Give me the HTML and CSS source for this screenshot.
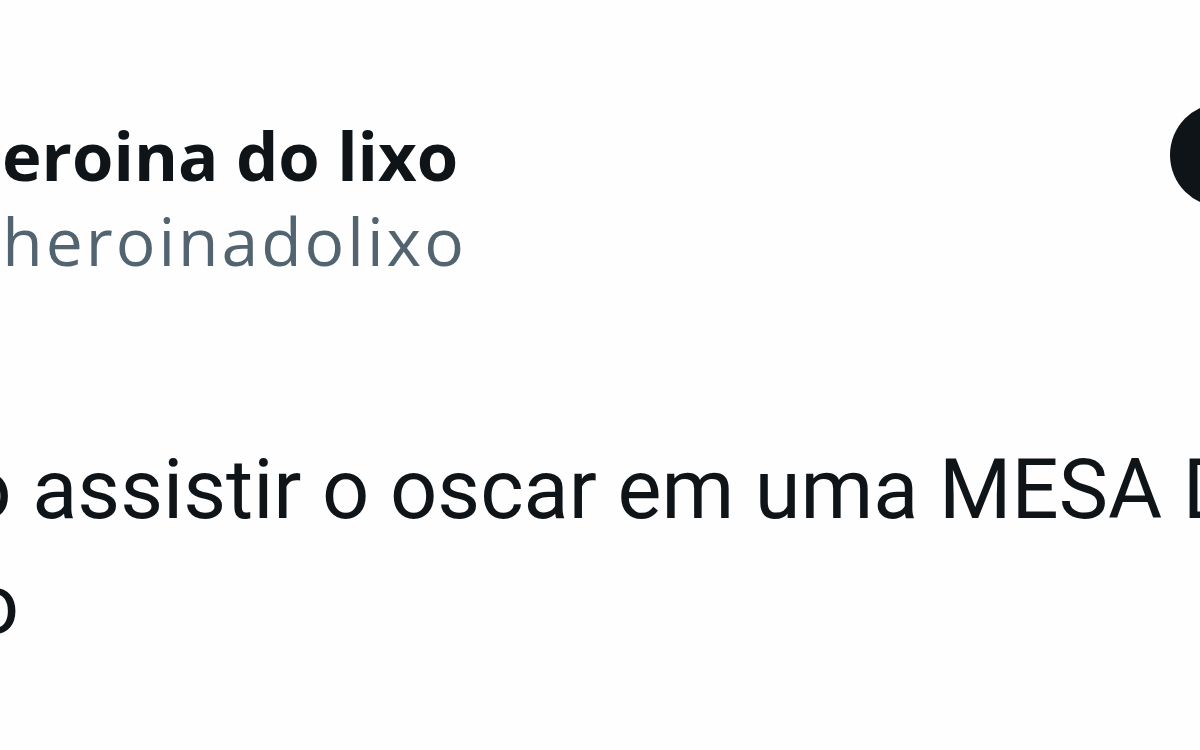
FILE: index.html
```html
<!DOCTYPE html>
<html lang="pt">
<head>
<meta charset="utf-8">
<link rel="stylesheet" href="styles.css">
<title>Tweet</title>
</head>
<body>
<div class="frame">
  <header class="head">
    <div class="ids">
      <div class="name">heroina do lixo</div>
      <div class="handle">@heroinadolixo</div>
    </div>
    <div class="logo"></div>
  </header>
  <div class="text">
    <p class="line">Indo assistir o oscar em uma MESA DE</p>
    <p class="line line2">tudo</p>
  </div>
</div>
</body>
</html>
```
FILE: styles.css
```css
html, body {
  margin: 0;
  padding: 0;
  background: #ffffff;
}
.frame {
  width: 1200px;
  height: 750px;
  overflow: hidden;
  position: relative;
  background: #fefefe;
}
.head {
  display: flex;
  justify-content: space-between;
  align-items: flex-start;
  padding-top: 112px;
}
.ids {
  margin-left: -42px;
}
.name {
  font-family: "Open Sans", "Liberation Sans", sans-serif;
  font-weight: 700;
  font-size: 67px;
  line-height: 86px;
  color: #0f1419;
  white-space: nowrap;
}
.handle {
  font-family: "Open Sans", "Liberation Sans", sans-serif;
  font-size: 66px;
  letter-spacing: 3px;
  line-height: 86px;
  color: #536471;
  white-space: nowrap;
  margin-left: -18px;
  margin-top: -1px;
}
.logo {
  width: 104px;
  height: 104px;
  border-radius: 50%;
  background: #0f1419;
  margin-top: -9px;
  margin-right: -74px;
  flex: none;
}
.text {
  margin-top: 149px;
  font-family: "Roboto", "Liberation Sans", sans-serif;
  font-size: 83px;
  line-height: 115px;
  color: #0f1419;
}
.line {
  margin: 0;
  white-space: nowrap;
  margin-left: -151px;
}
.line2 {
  margin-left: -148px;
}
```
